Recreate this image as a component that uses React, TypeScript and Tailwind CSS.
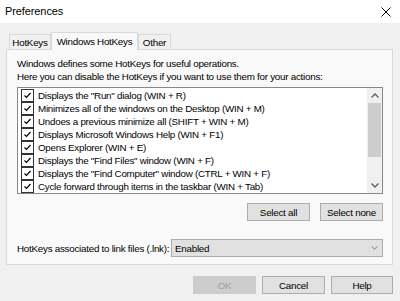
const items = [
  'Displays the "Run" dialog (WIN + R)',
  'Minimizes all of the windows on the Desktop (WIN + M)',
  'Undoes a previous minimize all (SHIFT + WIN + M)',
  'Displays Microsoft Windows Help (WIN + F1)',
  'Opens Explorer (WIN + E)',
  'Displays the "Find Files" window (WIN + F)',
  'Displays the "Find Computer" window (CTRL + WIN + F)',
  'Cycle forward through items in the taskbar (WIN + Tab)',
]

export default function App() {
  return (
    <div
      className="flex h-[301px] w-[400px] flex-col overflow-hidden whitespace-nowrap bg-[#f0f0f0] text-[9.8px] leading-[13px] tracking-[-0.25px] text-black"
      style={{ fontFamily: '"Liberation Sans", Arial, sans-serif' }}
    >
      {/* title bar */}
      <div className="flex h-[23px] shrink-0 items-center justify-between bg-white pl-[5px] pr-[9px]">
        <span className="text-[11px] tracking-[-0.1px]">Preferences</span>
        <svg viewBox="0 0 10 10" className="h-[10px] w-[10px]" fill="none">
          <path d="M0.5 0.5l9 9M9.5 0.5l-9 9" stroke="#000" strokeWidth="1" />
        </svg>
      </div>

      <div className="flex flex-col px-[6px] pt-[9px]">
        {/* tabs */}
        <div className="relative z-10 flex h-[17px] items-end pl-[3px]">
          <Tab label="HotKeys" width="w-[42px]" />
          <div className="-mb-px flex h-[18px] w-[87px] items-start justify-center border border-b-0 border-[#d9d9d9] bg-[#f9f9f9] pt-[2px]">
            Windows HotKeys
          </div>
          <Tab label="Other" width="w-[33px]" />
        </div>

        {/* panel */}
        <div className="flex h-[216px] w-[387px] flex-col border border-[#d9d9d9] bg-[#f9f9f9] px-[10px] pt-[7px]">
          <p>Windows defines some HotKeys for useful operations.</p>
          <p>Here you can disable the HotKeys if you want to use them for your actions:</p>

          <div className="mt-[4px] flex h-[107px] w-[366px] border border-[#828790] bg-white">
            <div className="flex flex-1 flex-col pl-[3px] pt-[1px]">
              {items.map((t) => (
                <div key={t} className="flex h-[13px] items-center gap-[4px]">
                  <Check />
                  <span>{t}</span>
                </div>
              ))}
            </div>
            <div className="flex w-[15px] flex-col items-center bg-[#f0f0f0]">
              <div className="flex h-[15px] items-center justify-center">
                <svg viewBox="0 0 8 5" className="h-[5px] w-[8px]" fill="none">
                  <path d="M0.5 4.5l3.5-3.5 3.5 3.5" stroke="#606060" strokeWidth="1.4" />
                </svg>
              </div>
              <div className="h-[54px] w-[13px] bg-[#cdcdcd]" />
              <div className="flex-1" />
              <div className="flex h-[15px] items-center justify-center">
                <svg viewBox="0 0 8 5" className="h-[5px] w-[8px]" fill="none">
                  <path d="M0.5 0.5l3.5 3.5 3.5-3.5" stroke="#606060" strokeWidth="1.4" />
                </svg>
              </div>
            </div>
          </div>

          <div className="mt-[9px] flex w-[366px] justify-end gap-[10px]">
            <Button label="Select all" width="w-[63px]" />
            <Button label="Select none" width="w-[63px]" />
          </div>

          <div className="mt-[18px] flex w-[366px] items-center justify-between">
            <span>HotKeys associated to link files (.lnk):</span>
            <div className="flex h-[18px] w-[212px] items-center justify-between border border-[#adadad] bg-[#e1e1e1] pl-[3px] pr-[4px]">
              <span>Enabled</span>
              <svg viewBox="0 0 8 5" className="h-[4px] w-[7px]" fill="none">
                <path d="M0.5 0.5l3.5 3.5 3.5-3.5" stroke="#606060" strokeWidth="1" />
              </svg>
            </div>
          </div>
        </div>

        {/* dialog buttons */}
        <div className="mt-[11px] flex justify-end gap-[6px] pr-px">
          <Button label="OK" width="w-[63px]" disabled />
          <Button label="Cancel" width="w-[63px]" />
          <Button label="Help" width="w-[62px]" />
        </div>
      </div>
    </div>
  )
}

function Tab({ label, width }: { label: string; width: string }) {
  return (
    <div className={`flex h-[15px] ${width} items-center justify-center border border-b-0 border-[#d9d9d9] bg-[#f0f0f0]`}>
      {label}
    </div>
  )
}

function Check() {
  return (
    <div className="flex h-[13px] w-[13px] shrink-0 items-center justify-center border border-[#333333] bg-white">
      <svg viewBox="0 0 9 9" className="h-[9px] w-[9px]" fill="none">
        <path d="M1.5 4.5l2 2L7.5 2" stroke="#000" strokeWidth="1.2" />
      </svg>
    </div>
  )
}

function Button({ label, width, disabled }: { label: string; width: string; disabled?: boolean }) {
  return (
    <div
      className={`flex h-[18px] ${width} items-center justify-center border ${
        disabled ? 'border-[#cccccc] bg-[#cccccc] text-[#a0a0a0]' : 'border-[#adadad] bg-[#e1e1e1]'
      }`}
    >
      {label}
    </div>
  )
}
